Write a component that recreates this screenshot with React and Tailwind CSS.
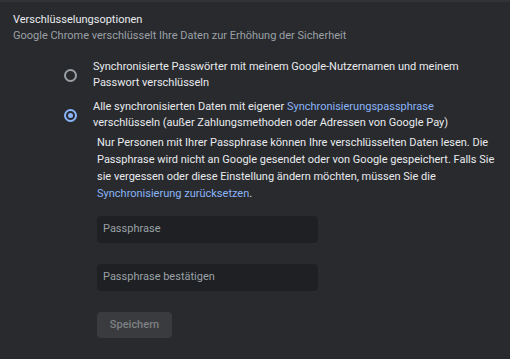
export default function App() {
  return (
    <div
      className="min-h-[359px] w-[510px] bg-[#292a2d] text-[11px] text-[#e8eaed] border-t-2 border-[#323336]"
      style={{ fontFamily: "Roboto, 'Liberation Sans', sans-serif" }}
    >
      <div className="px-[13px] pt-[10px] leading-[16px]">
        <div>Verschlüsselungsoptionen</div>
        <div className="text-[#9aa0a6]">
          Google Chrome verschlüsselt Ihre Daten zur Erhöhung der Sicherheit
        </div>
      </div>

      <div className="mt-[15px] pl-[64px] whitespace-nowrap">
        <div className="flex items-center gap-[16px]">
          <span className="w-[13px] h-[13px] rounded-full border-2 border-[#9aa0a6] shrink-0" />
          <div className="leading-[16px]">
            Synchronisierte Passwörter mit meinem Google-Nutzernamen und meinem
            <br />
            Passwort verschlüsseln
          </div>
        </div>

        <div className="flex items-center gap-[16px] mt-[8px]">
          <span className="w-[13px] h-[13px] rounded-full border-2 border-[#8ab4f8] shrink-0 flex items-center justify-center">
            <span className="w-[5px] h-[5px] rounded-full bg-[#8ab4f8]" />
          </span>
          <div className="leading-[16px]">
            Alle synchronisierten Daten mit eigener{" "}
            <span className="text-[#8ab4f8]">Synchronisierungspassphrase</span>
            <br />
            verschlüsseln (außer Zahlungsmethoden oder Adressen von Google Pay)
          </div>
        </div>

        <div className="pl-[33px] mt-[3px] leading-[17px]">
          Nur Personen mit Ihrer Passphrase können Ihre verschlüsselten Daten lesen. Die
          <br />
          Passphrase wird nicht an Google gesendet oder von Google gespeichert. Falls Sie
          <br />
          sie vergessen oder diese Einstellung ändern möchten, müssen Sie die
          <br />
          <span className="text-[#8ab4f8]">Synchronisierung zurücksetzen</span>.
        </div>

        <div className="pl-[33px] mt-[14px] flex flex-col gap-[21px]">
          <div className="w-[221px] h-[27px] rounded bg-[#1f2023] px-[6px] flex items-center text-[#9aa0a6]">
            Passphrase
          </div>
          <div className="w-[221px] h-[27px] rounded bg-[#1f2023] px-[6px] flex items-center text-[#9aa0a6]">
            Passphrase bestätigen
          </div>
          <div>
            <button className="w-[75px] h-[26px] rounded bg-[#3a3b3e] text-[#7d8084] font-medium">
              Speichern
            </button>
          </div>
        </div>
      </div>
    </div>
  );
}
